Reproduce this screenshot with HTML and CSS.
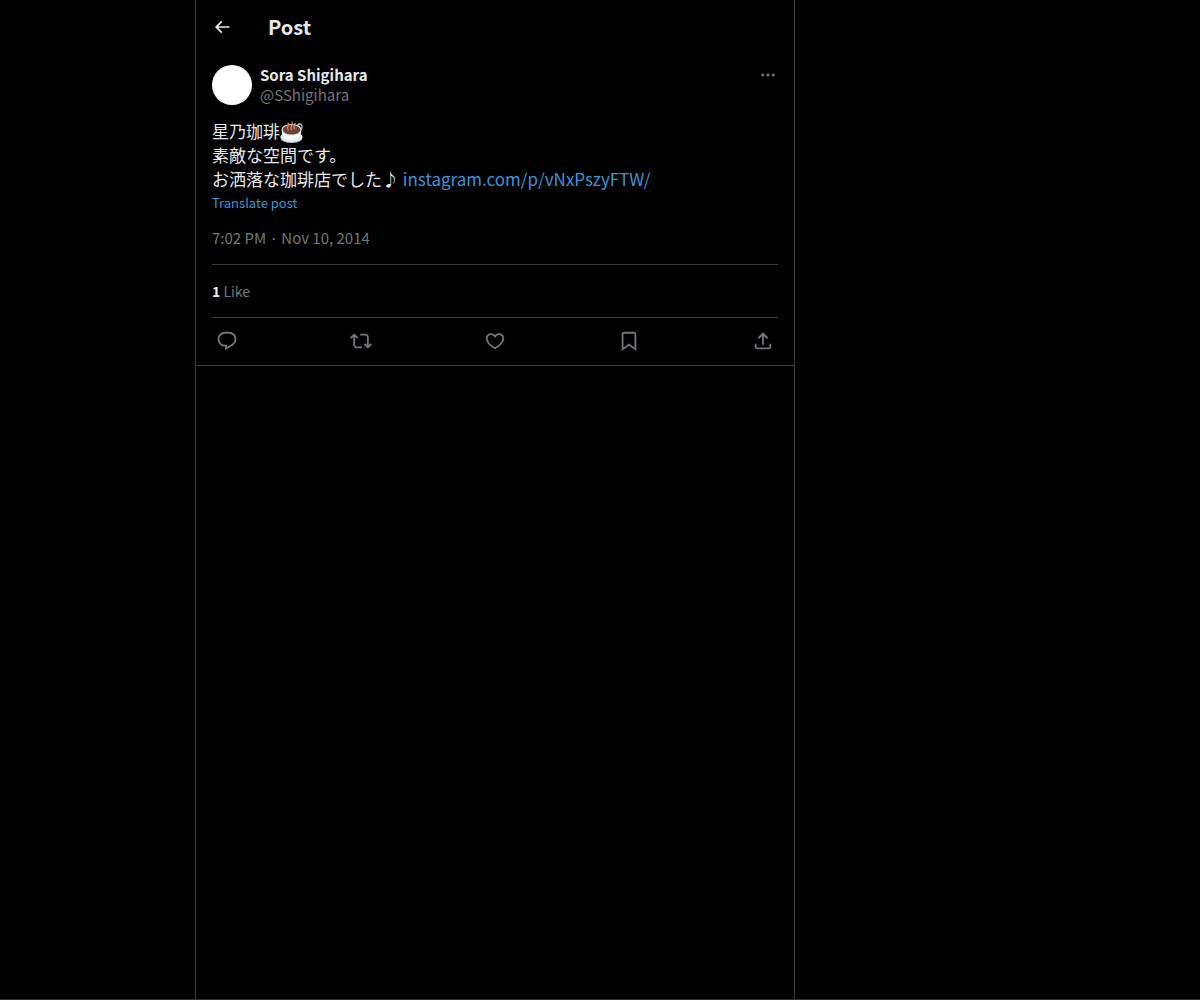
FILE: index.html
```html
<!DOCTYPE html>
<html lang="en">
    <head>
        <meta charset="UTF-8">
        <meta name="viewport" content="width=device-width, initial-scale=1">
        <title>Sora Shigihara: Post</title>
        <link rel="stylesheet" href="styles.css">
    </head>
    <body>
        <main class="column">
            <header class="top-bar">
                <button class="icon-btn back" type="button" aria-label="Back">
                    <svg viewBox="0 0 24 24"><path d="M7.414 13l5.043 5.04-1.414 1.42L3.586 12l7.457-7.46 1.414 1.42L7.414 11H21v2H7.414z"/></svg>
                </button>
                <h1>Post</h1>
            </header>
            <article class="post">
                <div class="author">
                    <div class="avatar"></div>
                    <div class="names">
                        <a class="name" href="#">Sora Shigihara</a>
                        <a class="handle" href="#">@SShigihara</a>
                    </div>
                    <button class="icon-btn more" type="button" aria-label="More">
                        <svg viewBox="0 0 24 24"><path d="M3 12c0-1.1.9-2 2-2s2 .9 2 2-.9 2-2 2-2-.9-2-2zm9 2c1.1 0 2-.9 2-2s-.9-2-2-2-2 .9-2 2 .9 2 2 2zm7 0c1.1 0 2-.9 2-2s-.9-2-2-2-2 .9-2 2 .9 2 2 2z"/></svg>
                    </button>
                </div>
                <p class="text" lang="ja">星乃珈琲<svg class="emoji" viewBox="0 0 24 24" role="img" aria-label="Hot beverage">
                        <ellipse cx="12" cy="17.5" rx="11.5" ry="5.5" fill="#b9c4c9"/>
                        <ellipse cx="12" cy="16.5" rx="11.5" ry="5.3" fill="#e4eaed"/>
                        <ellipse cx="20.5" cy="6" rx="2.4" ry="3" fill="none" stroke="#8fa3ad" stroke-width="1.6"/>
                        <path d="M1.7 9c0 6.5 3.8 11 10.3 11s10.3-4.5 10.3-11z" fill="#f7f9fa"/>
                        <ellipse cx="12" cy="9" rx="10.4" ry="6" fill="#dce3e6"/>
                        <ellipse cx="12" cy="9.2" rx="9.3" ry="5" fill="#74402f"/>
                        <path d="M8.5 9c-2.5-2 1.5-4 0-7M12 9c-2.500-2.500 2-4 .5-8M15 8c-2-2 2-3.500.5-5.500" fill="none" stroke="#d99a72" stroke-width="1.2" stroke-linecap="round"/>
                    </svg><br>素敵な空間です。<br>お洒落な珈琲店でした♪ <a href="#">instagram.com/p/vNxPszyFTW/</a></p>
                <button class="translate" type="button">Translate post</button>
                <a class="date" href="#">7:02 PM · Nov 10, 2014</a>
                <div class="stats"><a href="#"><strong>1</strong> Like</a></div>
                <div class="actions">
                    <button class="icon-btn" type="button" aria-label="Reply">
                        <svg viewBox="0 0 24 24"><path d="M1.751 10c0-4.42 3.584-8 8.005-8h4.366c4.49 0 8.129 3.64 8.129 8.13 0 2.96-1.607 5.68-4.196 7.11l-8.054 4.46v-3.69h-.067c-4.49.1-8.183-3.51-8.183-8.01zm8.005-6c-3.317 0-6.005 2.69-6.005 6 0 3.37 2.77 6.08 6.138 6.01l.351-.01h1.761v2.3l5.087-2.81c1.951-1.08 3.163-3.13 3.163-5.36 0-3.39-2.744-6.13-6.129-6.13H9.756z"/></svg>
                    </button>
                    <button class="icon-btn" type="button" aria-label="Repost">
                        <svg viewBox="0 0 24 24"><path d="M4.5 3.88l4.432 4.14-1.364 1.46L5.5 7.55V16c0 1.1.896 2 2 2H13v2H7.5c-2.209 0-4-1.79-4-4V7.55L1.432 9.48.068 8.02 4.5 3.88zM16.5 6H11V4h5.5c2.209 0 4 1.79 4 4v8.45l2.068-1.93 1.364 1.46-4.432 4.14-4.432-4.14 1.364-1.46 2.068 1.93V8c0-1.1-.896-2-2-2z"/></svg>
                    </button>
                    <button class="icon-btn" type="button" aria-label="Like">
                        <svg viewBox="0 0 24 24"><path d="M16.697 5.5c-1.222-.06-2.679.51-3.89 2.16l-.805 1.09-.806-1.09C9.984 6.01 8.526 5.44 7.304 5.5c-1.243.07-2.349.78-2.91 1.91-.552 1.12-.633 2.78.479 4.82 1.074 1.97 3.257 4.27 7.129 6.61 3.87-2.34 6.052-4.64 7.126-6.61 1.111-2.04 1.03-3.7.477-4.82-.561-1.13-1.666-1.84-2.908-1.91zm4.187 7.69c-1.351 2.48-4.001 5.12-8.379 7.67l-.503.3-.504-.3c-4.379-2.55-7.029-5.19-8.382-7.67-1.36-2.5-1.41-4.86-.514-6.67.887-1.79 2.647-2.91 4.601-3.01 1.651-.09 3.368.56 4.798 2.01 1.429-1.45 3.146-2.1 4.796-2.01 1.954.1 3.714 1.22 4.601 3.01.896 1.81.846 4.17-.514 6.67z"/></svg>
                    </button>
                    <button class="icon-btn" type="button" aria-label="Bookmark">
                        <svg viewBox="0 0 24 24"><path d="M4 4.5C4 3.12 5.119 2 6.5 2h11C18.881 2 20 3.12 20 4.5v18.44l-8-5.71-8 5.71V4.5zM6.5 4c-.276 0-.5.22-.5.5v14.56l6-4.29 6 4.29V4.5c0-.28-.224-.5-.5-.5h-11z"/></svg>
                    </button>
                    <button class="icon-btn" type="button" aria-label="Share">
                        <svg viewBox="0 0 24 24"><path d="M12 2.59l5.7 5.7-1.41 1.42L13 6.41V16h-2V6.41l-3.3 3.3-1.41-1.42L12 2.59zM21 15l-.02 3.51c0 1.38-1.12 2.49-2.5 2.49H5.5C4.11 21 3 19.88 3 18.5V15h2v3.5c0 .28.22.5.5.5h12.98c.28 0 .5-.22.5-.5L19 15h2z"/></svg>
                    </button>
                </div>
            </article>
        </main>
    </body>
</html>
```
FILE: styles.css
```css
* {
    box-sizing: border-box;
}

body {
    margin: 0;
    min-height: 100vh;
    display: grid;
    grid-template-columns: 13fr minmax(0, 600px) 27fr;
    background: #000;
    color: #e7e9ea;
    border-bottom: 1px solid #2f3336;
    font-family: "Noto Sans CJK JP", "Noto Sans", sans-serif;
    font-size: 15px;
    line-height: 20px;
}

a {
    color: inherit;
    text-decoration: none;
}

a:hover {
    text-decoration: underline;
}

button {
    padding: 0;
    border: none;
    background: none;
    font-family: inherit;
    cursor: pointer;
}

.column {
    grid-column: 2;
    border-left: 1px solid #38393b;
    border-right: 1px solid #38393b;
}

.top-bar {
    display: flex;
    align-items: center;
    gap: 36px;
    height: 53px;
    padding: 0 16px;
}

h1 {
    margin: 0;
    font-size: 20px;
    line-height: 24px;
}

.icon-btn {
    display: flex;
    padding: 4px;
    color: #71767b;
}

.icon-btn svg {
    width: 22px;
    height: 22px;
    fill: currentColor;
}

.icon-btn.back {
    padding: 0;
    color: #e7e9ea;
}

.icon-btn.back svg {
    width: 20px;
    height: 20px;
}

.icon-btn.more {
    padding: 1px;
}

.icon-btn.more svg {
    width: 18px;
    height: 18px;
}

.post {
    padding: 12px 16px 0;
    border-bottom: 1px solid #38393b;
}

.author {
    display: flex;
    align-items: flex-start;
    gap: 8px;
}

.avatar {
    width: 40px;
    height: 40px;
    border-radius: 50%;
    background: #fff;
}

.names {
    display: flex;
    flex: 1;
    flex-direction: column;
}

.name {
    font-weight: bold;
}

.handle,
.date,
.stats {
    color: #71767b;
}

.text {
    margin: 14px 0 2px;
    font-size: 17px;
    line-height: 24px;
}

.text a,
.translate {
    color: #3b94d9;
}

.emoji {
    width: 23px;
    height: 23px;
    vertical-align: -2px;
    margin: -4px 0;
}

.translate {
    display: block;
    font-size: 13px;
    line-height: 20px;
}

.date {
    display: block;
    margin-top: 15px;
    padding-bottom: 16px;
    border-bottom: 1px solid #38393b;
}

.stats {
    padding: 16px 0;
    border-bottom: 1px solid #38393b;
    font-size: 14px;
}

.stats strong {
    color: #e7e9ea;
}

.actions {
    display: flex;
    justify-content: space-between;
    padding: 8px 0 9px;
}
```
